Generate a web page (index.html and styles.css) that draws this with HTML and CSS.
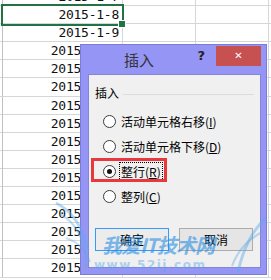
FILE: index.html
```html
<!DOCTYPE html>
<html lang="zh-CN">
  <head>
    <meta charset="UTF-8" />
    <title>插入</title>
    <link rel="stylesheet" href="styles.css">
  </head>
  <body>
    <div id="sheet">
      <div class="row"><div class="hd"></div><div class="cell">2015-1-7</div><div class="cell"></div><div class="cell"></div><div class="cell"></div></div>
      <div class="row"><div class="hd"></div><div class="cell sel">2015-1-8</div><div class="cell"></div><div class="cell"></div><div class="cell"></div></div>
      <div class="row"><div class="hd"></div><div class="cell">2015-1-9</div><div class="cell"></div><div class="cell"></div><div class="cell"></div></div>
      <div class="row"><div class="hd"></div><div class="cell">2015-1-10</div><div class="cell"></div><div class="cell"></div><div class="cell"></div></div>
      <div class="row"><div class="hd"></div><div class="cell">2015-1-11</div><div class="cell"></div><div class="cell"></div><div class="cell"></div></div>
      <div class="row"><div class="hd"></div><div class="cell">2015-1-12</div><div class="cell"></div><div class="cell"></div><div class="cell"></div></div>
      <div class="row"><div class="hd"></div><div class="cell">2015-1-13</div><div class="cell"></div><div class="cell"></div><div class="cell"></div></div>
      <div class="row"><div class="hd"></div><div class="cell">2015-1-14</div><div class="cell"></div><div class="cell"></div><div class="cell"></div></div>
      <div class="row"><div class="hd"></div><div class="cell">2015-1-15</div><div class="cell"></div><div class="cell"></div><div class="cell"></div></div>
      <div class="row"><div class="hd"></div><div class="cell">2015-1-16</div><div class="cell"></div><div class="cell"></div><div class="cell"></div></div>
      <div class="row"><div class="hd"></div><div class="cell">2015-1-17</div><div class="cell"></div><div class="cell"></div><div class="cell"></div></div>
      <div class="row"><div class="hd"></div><div class="cell">2015-1-18</div><div class="cell"></div><div class="cell"></div><div class="cell"></div></div>
      <div class="row"><div class="hd"></div><div class="cell">2015-1-19</div><div class="cell"></div><div class="cell"></div><div class="cell"></div></div>
      <div class="row"><div class="hd"></div><div class="cell">2015-1-20</div><div class="cell"></div><div class="cell"></div><div class="cell"></div></div>
      <div class="row"><div class="hd"></div><div class="cell">2015-1-21</div><div class="cell"></div><div class="cell"></div><div class="cell"></div></div>
      <div class="row"><div class="hd"></div><div class="cell">2015-1-22</div><div class="cell"></div><div class="cell"></div><div class="cell"></div></div>
    </div>

    <div class="dialog">
      <div class="titlebar">
        <span class="ttl">插入</span>
        <span class="help">?</span>
        <span class="close">&#x2715;</span>
      </div>
      <div class="panel">
        <div class="group">
          <div class="legend"><span>插入</span><i></i></div>
          <div class="opt"><span class="rad"></span><span class="lbl">活动单元格右移(<u>I</u>)</span></div>
          <div class="opt"><span class="rad"></span><span class="lbl">活动单元格下移(<u>D</u>)</span></div>
          <div class="opt hl"><span class="rad on"></span><span class="lbl focus">整行(<u>R</u>)</span></div>
          <div class="opt"><span class="rad"></span><span class="lbl">整列(<u>C</u>)</span></div>
          <div class="btns">
            <span class="btn def">确定</span>
            <span class="btn">取消</span>
          </div>
        </div>
      </div>
    </div>

    <div class="mark">
      <svg width="271" height="280" viewBox="0 0 271 280">
        <path d="M56 203 Q80 215 88 250" fill="none" stroke="#5aa9e6" stroke-width="3" opacity="0.45" />
        <path d="M60 214 Q86 228 86 268" fill="none" stroke="#5aa9e6" stroke-width="2" opacity="0.4" />
        <path d="M66 238 Q84 244 90 262" fill="none" stroke="#5aa9e6" stroke-width="2" opacity="0.35" />
        <path d="M266 218 Q246 236 238 272" fill="none" stroke="#5aa9e6" stroke-width="3" opacity="0.45" />
        <path d="M262 232 Q240 244 232 266" fill="none" stroke="#5aa9e6" stroke-width="2" opacity="0.4" />
      </svg>
      <span class="wm1">我爱IT技术网</span>
      <span class="wm2">www.52ij.com</span>
    </div>
  </body>
</html>
```

FILE: styles.css
```css
body {
  margin: 0;
  width: 271px;
  height: 280px;
  overflow: hidden;
  background: #ffffff;
  font-family: "Noto Sans CJK SC", "DejaVu Sans", sans-serif;
  position: relative;
}

#sheet {
  margin-top: -12px;
}

.row {
  display: grid;
  grid-template-columns: 3px 120px 73px 73px 1fr;
  height: 18.1px;
  box-sizing: border-box;
  border-bottom: 1px solid #d6d6d6;
}

.hd {
  border-right: 1px solid #c0c0c0;
}

.cell {
  border-right: 1px solid #d6d6d6;
  text-align: right;
  padding-right: 3px;
  font-family: "DejaVu Sans Mono", monospace;
  font-size: 13px;
  letter-spacing: -0.25px;
  line-height: 18px;
  color: #111;
  position: relative;
}

.sel::after {
  content: "";
  position: absolute;
  left: -2px;
  top: -2px;
  right: -2px;
  bottom: -2px;
  border: 2px solid #217346;
}

.sel::before {
  content: "";
  position: absolute;
  right: -4px;
  bottom: -4px;
  width: 6px;
  height: 6px;
  background: #217346;
  border: 1px solid #fff;
  z-index: 1;
}

.dialog {
  position: absolute;
  left: 80px;
  top: 44px;
  width: 187px;
  height: 231px;
  box-sizing: border-box;
  background: #9595f5;
  border: 1px solid #7c7cd8;
  padding: 0 5px 6px 7px;
  display: flex;
  flex-direction: column;
}

.titlebar {
  height: 29px;
  display: flex;
  align-items: flex-start;
}

.ttl {
  margin-left: 36px;
  font-size: 15px;
  line-height: 29px;
  color: #333;
  flex: 1;
}

.help {
  font-family: "DejaVu Sans", sans-serif;
  font-weight: bold;
  font-size: 13px;
  line-height: 20px;
  margin-top: 1px;
  margin-right: 11px;
  color: #222;
}

.close {
  width: 45px;
  height: 20px;
  margin-top: 1px;
  background: #c75050;
  color: #fff;
  font-family: "DejaVu Sans", sans-serif;
  font-weight: bold;
  font-size: 10px;
  line-height: 20px;
  text-align: center;
}

.panel {
  flex: 1;
  background: #f0f0f0;
  border: 1px solid #8585d8;
}

.group {
  margin: 11px 6px 0 6px;
  font-size: 12px;
  color: #000;
}

.legend {
  display: flex;
  align-items: center;
  gap: 4px;
  height: 14px;
  line-height: 14px;
  margin-bottom: 9px;
}

.legend i {
  flex: 1;
  border-top: 1px solid #dcdcdc;
  margin-top: 2px;
}

.opt {
  display: flex;
  align-items: center;
  height: 25px;
  width: fit-content;
  padding-left: 8px;
  position: relative;
}

.hl::after {
  content: "";
  position: absolute;
  left: -4px;
  right: -4px;
  top: -1px;
  bottom: 2px;
  border: 3px solid #e8383d;
}

.rad {
  width: 13px;
  height: 13px;
  box-sizing: border-box;
  border-radius: 50%;
  border: 1px solid #3c3c3c;
  background: #fff;
  margin-right: 3px;
  display: flex;
  align-items: center;
  justify-content: center;
}

.rad.on::after {
  content: "";
  width: 5px;
  height: 5px;
  border-radius: 50%;
  background: #111;
}

.lbl {
  border: 1px solid transparent;
  padding: 1px 1px;
  line-height: 15px;
}

.lbl.focus {
  border: 1px dotted #000;
}

.btns {
  display: flex;
  gap: 10px;
  margin-top: 19px;
}

.btn {
  width: 74px;
  height: 23px;
  box-sizing: border-box;
  border: 1px solid #acacac;
  background: #e5e5e5;
  text-align: center;
  line-height: 21px;
  font-size: 12px;
}

.btn.def {
  border-color: #3399ff;
  background: #ececec;
}

.mark {
  position: absolute;
  left: 0;
  top: 0;
  width: 271px;
  height: 280px;
  pointer-events: none;
}

.mark svg {
  position: absolute;
  left: 0;
  top: 0;
}

.wm1 {
  position: absolute;
  left: 102px;
  top: 233px;
  font-size: 20px;
  font-weight: bold;
  font-style: italic;
  color: #2d8fe3;
  opacity: 0.6;
  line-height: 24px;
  letter-spacing: -1px;
}

.wm2 {
  position: absolute;
  left: 94px;
  top: 258px;
  font-family: "DejaVu Sans", sans-serif;
  font-size: 12px;
  font-weight: bold;
  color: #5aa9e6;
  opacity: 0.45;
  letter-spacing: 1.5px;
  line-height: 14px;
}
```
